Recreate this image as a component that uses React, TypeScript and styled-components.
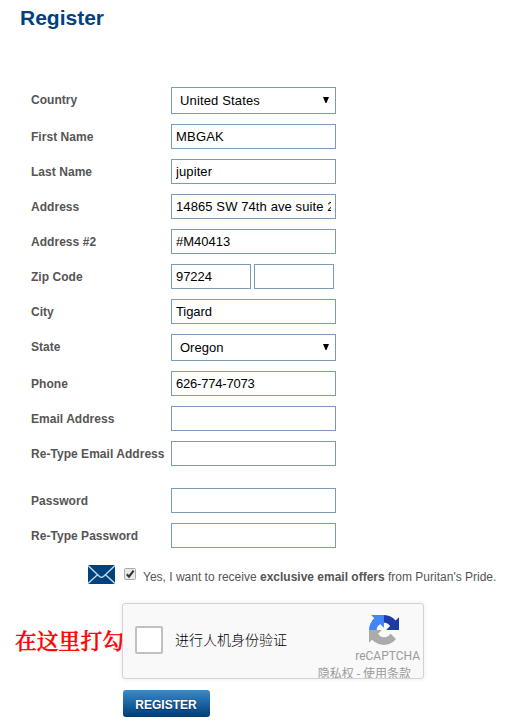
import React from "react";
import styled, { createGlobalStyle } from "styled-components";

const GlobalStyle = createGlobalStyle`
  * { box-sizing: border-box; }
  body {
    margin: 0;
    background: #fff;
    font-family: "Liberation Sans", Arial, "Noto Sans CJK SC", sans-serif;
    font-size: 12px;
    color: #555;
  }
`;

const Page = styled.main`
  width: 525px;
  height: 724px;
  overflow: hidden;
  display: flex;
  flex-direction: column;
`;

const Title = styled.h1`
  margin: 0;
  padding: 5px 0 0 20px;
  height: 87px;
  font-size: 21px;
  line-height: 26px;
  font-weight: bold;
  color: #00427e;
`;

const Fields = styled.form`
  display: flex;
  flex-direction: column;
  gap: 10px;
  padding-left: 31px;
`;

const FieldRow = styled.div<{ $spaced?: boolean }>`
  display: flex;
  align-items: center;
  margin-top: ${(p) => (p.$spaced ? 12 : 0)}px;
`;

const Label = styled.label<{ $raised?: boolean }>`
  width: 140px;
  flex: none;
  padding-bottom: ${(p) => (p.$raised ? 2 : 0)}px;
  font-weight: bold;
  line-height: 16px;
  white-space: nowrap;
  letter-spacing: 0.04px;
`;

const Controls = styled.div`
  display: flex;
  gap: 3px;
`;

const TextInput = styled.input<{ $width?: number; $tracking?: number }>`
  width: ${(p) => p.$width ?? 165}px;
  height: 25px;
  padding: 0 4px;
  border: 1px solid #7a9ab8;
  border-radius: 0;
  background: #fff;
  color: #000;
  font: 13px "Liberation Sans", Arial, sans-serif;
  letter-spacing: ${(p) => p.$tracking ?? 0}px;
  outline: none;
`;

const SelectFrame = styled.div`
  position: relative;
  display: flex;
`;

const Select = styled.select<{ $tracking?: number }>`
  appearance: none;
  width: 165px;
  height: 27px;
  padding: 0 20px 0 8px;
  border: 1px solid #7a9ab8;
  border-radius: 0;
  background: #fff;
  color: #000;
  font: 13px "Liberation Sans", Arial, sans-serif;
  letter-spacing: ${(p) => p.$tracking ?? 0}px;
`;

const Arrow = styled.svg`
  position: absolute;
  right: 7px;
  top: 10px;
  width: 6px;
  height: 6px;
  pointer-events: none;
`;

const OfferRow = styled.div`
  display: flex;
  align-items: center;
  height: 20px;
  margin: 16px 0 0 88px;
`;

const Envelope = styled.svg`
  width: 27px;
  height: 19px;
  margin-right: 9px;
  flex: none;
`;

const CheckMark = styled.svg`
  width: 12px;
  height: 12px;
  margin-right: 7px;
  flex: none;
`;

const OfferText = styled.span`
  white-space: nowrap;
  line-height: 16px;
  padding-top: 5px;
`;

const VerifyRow = styled.div`
  display: flex;
  align-items: center;
  height: 76px;
  margin: 19px 0 0 15px;
`;

const Hint = styled.span`
  width: 107px;
  flex: none;
  color: #f00;
  font-family: "Noto Serif CJK SC", "Noto Sans CJK SC", serif;
  font-size: 21.8px;
  font-weight: 500;
  line-height: 30px;
  padding-bottom: 3px;
  white-space: nowrap;
  -webkit-text-stroke: 0.5px #f00;
`;

const Captcha = styled.section`
  width: 302px;
  height: 76px;
  flex: none;
  display: flex;
  overflow: hidden;
  border: 1px solid #d3d3d3;
  border-radius: 3px;
  background: #f9f9f9;
  box-shadow: 0 0 4px 1px rgba(0, 0, 0, 0.06);
  padding-left: 12px;
`;

const CaptchaBox = styled.span`
  width: 28px;
  height: 28px;
  margin: 22px 12px 0 0;
  flex: none;
  border: 2px solid #c1c1c1;
  border-radius: 2px;
  background: #fff;
`;

const CaptchaText = styled.span`
  width: 142px;
  flex: none;
  color: #000;
  font: 300 14px/20px Roboto, "Noto Sans CJK SC", sans-serif;
  padding-top: 26px;
`;

const Brand = styled.div`
  display: flex;
  flex-direction: column;
  align-items: flex-end;
  width: 103px;
  flex: none;
  color: #9b9b9b;
  font: 12px/14px Roboto, "Noto Sans CJK SC", sans-serif;
  white-space: nowrap;
`;

const Logo = styled.svg`
  width: 30px;
  height: 30px;
  margin: 11px 21px 0 0;
  flex: none;
`;

const BrandName = styled.span`
  margin-top: 4px;
`;

const Legal = styled.span`
  margin: 4px 9px 0 0;
`;

const RegisterButton = styled.button`
  width: 87px;
  height: 27px;
  margin: 11px 0 0 123px;
  padding: 2px 1px 0 0;
  border: 0;
  border-radius: 3px;
  background: linear-gradient(#3a8bca, #1f67a5 45%, #003c76);
  color: #fff;
  font: bold 12px "Liberation Sans", Arial, sans-serif;
  text-shadow: 0 1px 1px rgba(0, 30, 70, 0.7);
`;

type Field = {
  label: string;
  value?: string;
  kind?: "select" | "zip";
  spaced?: boolean;
  tracking?: number;
};

const fields: Field[] = [
  { label: "Country", value: "United States", kind: "select", tracking: 0.15 },
  { label: "First Name", value: "MBGAK", tracking: 0.2 },
  { label: "Last Name", value: "jupiter", tracking: 0.1 },
  { label: "Address", value: "14865 SW 74th ave suite 200", tracking: 0.1 },
  { label: "Address #2", value: "#M40413" },
  { label: "Zip Code", value: "97224", kind: "zip", tracking: -0.05 },
  { label: "City", value: "Tigard", tracking: -0.1 },
  { label: "State", value: "Oregon", kind: "select" },
  { label: "Phone", value: "626-774-7073", tracking: -0.2 },
  { label: "Email Address" },
  { label: "Re-Type Email Address" },
  { label: "Password", spaced: true },
  { label: "Re-Type Password" },
];

function Control({ field }: { field: Field }) {
  if (field.kind === "select") {
    return (
      <SelectFrame>
        <Select defaultValue={field.value} $tracking={field.tracking}>
          <option>{field.value}</option>
        </Select>
        <Arrow viewBox="0 0 6 6">
          <path d="M0 0H6L3.5 6H2.5Z" fill="#000" />
        </Arrow>
      </SelectFrame>
    );
  }
  if (field.kind === "zip") {
    return (
      <Controls>
        <TextInput $width={80} defaultValue={field.value} $tracking={field.tracking} />
        <TextInput $width={80} />
      </Controls>
    );
  }
  return <TextInput defaultValue={field.value} $tracking={field.tracking} />;
}

export default function App() {
  return (
    <Page>
      <GlobalStyle />
      <Title>Register</Title>
      <Fields>
        {fields.map((field) => (
          <FieldRow key={field.label} $spaced={field.spaced}>
            <Label $raised={field.kind === "select"}>{field.label}</Label>
            <Control field={field} />
          </FieldRow>
        ))}
      </Fields>
      <OfferRow>
        <Envelope viewBox="0 0 27 19">
          <rect width="27" height="19" fill="#00437c" />
          <path
            d="M0 .5L11.5 11.5Q13.5 13 15.5 11.5L27 .5M0 18.5L9.5 9.7M27 18.5L17.5 9.7"
            fill="none"
            stroke="#c6d9e8"
            strokeWidth="1.4"
          />
        </Envelope>
        <CheckMark viewBox="0 0 12 12">
          <rect x=".5" y=".5" width="11" height="11" rx="1" fill="#e9e9e9" stroke="#aaa" />
          <path d="M2.8 6.3L5 8.7L9.6 2.6" fill="none" stroke="#333" strokeWidth="2.1" />
        </CheckMark>
        <OfferText>
          Yes, I want to receive <b>exclusive email offers</b> from Puritan's Pride.
        </OfferText>
      </OfferRow>
      <VerifyRow>
        <Hint>在这里打勾</Hint>
        <Captcha>
          <CaptchaBox />
          <CaptchaText>进行人机身份验证</CaptchaText>
          <Brand>
            <Logo viewBox="0 0 64 64">
              <path
                fill="#1c3aa9"
                d="M64 31.955l-.033-1.37V4.687l-7.16 7.16C50.948 4.674 42.033.093 32.05.093c-10.4 0-19.622 4.96-25.458 12.64l11.736 11.86a15.55 15.55 0 0 1 4.754-5.334c2.05-1.6 4.952-2.906 8.968-2.906.485 0 .86.057 1.135.163 4.976.393 9.288 3.14 11.828 7.124l-8.307 8.307L64 31.953"
              />
              <path
                fill="#4285f4"
                d="M31.862.094l-1.37.033H4.594l7.16 7.16C4.58 13.147 0 22.06 0 32.046c0 10.4 4.96 19.622 12.64 25.458L24.5 45.768a15.55 15.55 0 0 1-5.334-4.754c-1.6-2.05-2.906-4.952-2.906-8.968 0-.485.057-.86.163-1.135.393-4.976 3.14-9.288 7.124-11.828l8.307 8.307L31.86.095"
              />
              <path
                fill="#ababab"
                d="M.001 32.045l.033 1.37v25.898l7.16-7.16c5.86 7.173 14.774 11.754 24.76 11.754 10.4 0 19.622-4.96 25.458-12.64l-11.736-11.86a15.55 15.55 0 0 1-4.754 5.334c-2.05 1.6-4.952 2.906-8.968 2.906-.485 0-.86-.057-1.135-.163-4.976-.393-9.288-3.14-11.828-7.124l8.307-8.307c-10.522.04-22.4.066-27.295-.005"
              />
            </Logo>
            <BrandName>reCAPTCHA</BrandName>
            <Legal>隐私权 - 使用条款</Legal>
          </Brand>
        </Captcha>
      </VerifyRow>
      <RegisterButton>REGISTER</RegisterButton>
    </Page>
  );
}
